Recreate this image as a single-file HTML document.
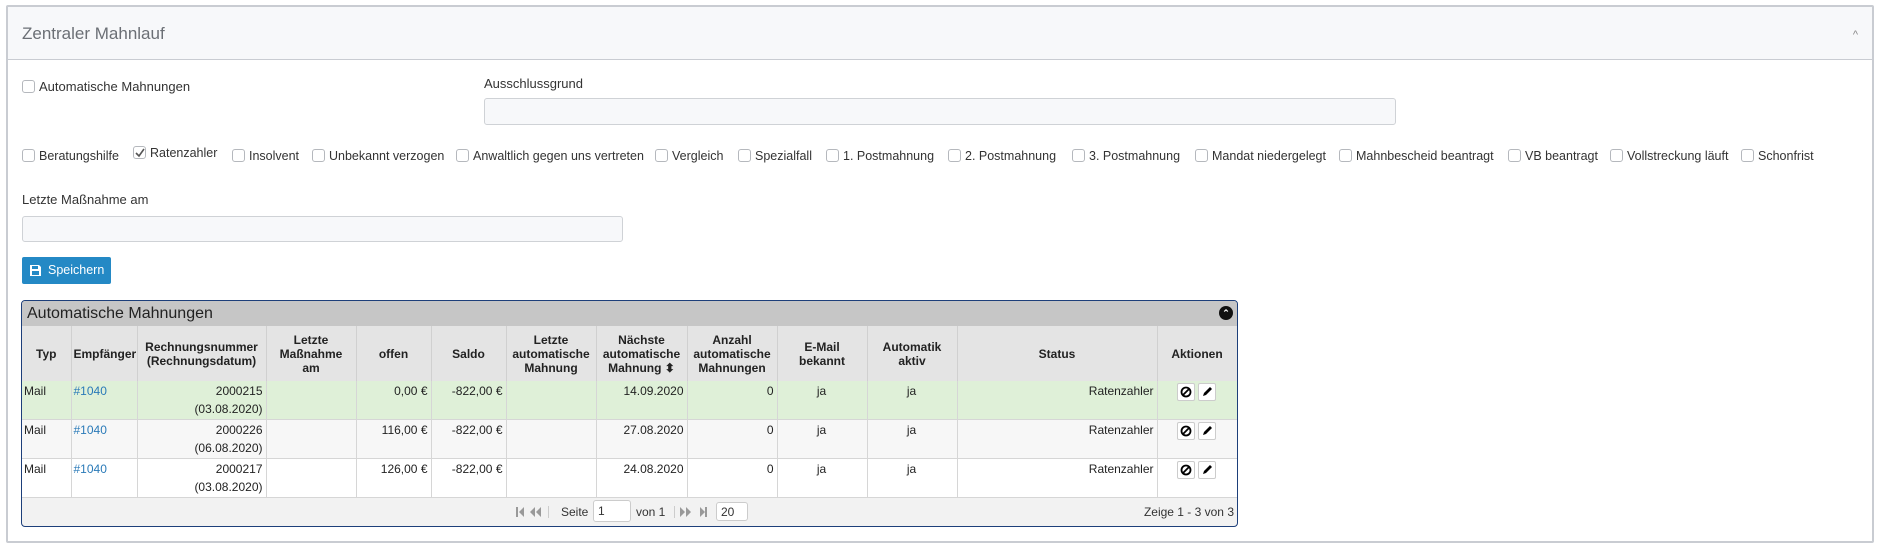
<!DOCTYPE html>
<html><head><meta charset="utf-8"><style>
*{box-sizing:border-box}
body{margin:0;width:1884px;height:550px;background:#fff;font-family:"Liberation Sans",Arial,sans-serif;color:#333;position:relative;overflow:hidden}
.panel{position:absolute;left:6px;top:5px;width:1868px;height:538px;border:2px solid #c9ccd2;border-radius:2px}
.ph{position:absolute;left:0;top:0;right:0;height:53px;background:#f7f8fa;border-bottom:1px solid #c9ccd2}
.ph span{position:absolute;left:14px;top:17px;font-size:17px;color:#6b6f75}
.ph i{position:absolute;right:14px;top:22px;font-style:normal;font-size:11px;color:#888}
.a{position:absolute;font-size:12.5px;white-space:nowrap}
.cb{display:inline-block;width:13px;height:13px;border:1px solid #b5b8bd;border-radius:3px;vertical-align:-2px;margin-right:4px;background:#fff;position:relative}
.inp{position:absolute;border:1px solid #cfd2d6;border-radius:3px;background:#f7f8fa}
.btn{position:absolute;left:22px;top:257px;width:89px;height:27px;background:#2489c5;border-radius:2px;color:#fff;font-size:12.5px;line-height:27px;padding-left:26px}
.tbl{position:absolute;left:21px;top:300px;width:1217px;height:227px;border:1px solid #1d3f7a;border-radius:4px;overflow:hidden;background:#f2f2f2}
.cap{height:25px;background:#c6c6c6;font-size:16px;line-height:25px;padding-left:5px;color:#222;position:relative}
.cap b{position:absolute;right:4px;top:5px;width:14px;height:14px;border-radius:50%;background:#111;color:#fff;font-size:9px;line-height:14px;text-align:center}
table{border-collapse:collapse;table-layout:fixed;width:1215px;font-size:12px}
th{background:#e4e4e4;height:55px;font-weight:bold;border-right:1px solid #d0d0d0;padding:0 6px;line-height:14px;color:#222;font-size:12px}
td{border-right:1px solid #d6d6d6;border-bottom:1px solid #d6d6d6;vertical-align:top;padding:1px 3px 0 2px;height:39px;line-height:18px;color:#222}
tr.g td{background:#dff0d8;height:38px}
tr.w2 td{background:#f7f7f7}
tr.w3 td{background:#fff}
.r{text-align:right}.c{text-align:center}
a{color:#2a7ab8;text-decoration:none}
.ic{display:inline-block;width:18px;height:18px;border:1px solid #ccc;border-radius:2px;background:#fff;vertical-align:top;margin-top:1px;position:relative}
.ic svg{position:absolute;left:2px;top:2px}
.ft{position:absolute;left:0;right:0;bottom:0;height:28px;font-size:12px;color:#333}
</style></head><body>
<div class="panel">
<div class="ph"><span>Zentraler Mahnlauf</span><i>^</i></div>
</div>
<div class="a" style="left:22px;top:79px;font-size:13px"><span class="cb"></span>Automatische Mahnungen</div>
<div class="a" style="left:484px;top:76px;font-size:13px">Ausschlussgrund</div>
<div class="inp" style="left:484px;top:98px;width:912px;height:27px"></div>
<div class="a" style="left:22px;top:149px"><span class="cb"></span>Beratungshilfe</div>
<div class="a" style="left:133px;top:146px"><span class="cb"><svg width="11" height="11" style="position:absolute;left:0;top:0"><path d="M2 6l3 3 5-7" stroke="#555" stroke-width="1.6" fill="none"/></svg></span>Ratenzahler</div>
<div class="a" style="left:232px;top:149px"><span class="cb"></span>Insolvent</div>
<div class="a" style="left:312px;top:149px"><span class="cb"></span>Unbekannt verzogen</div>
<div class="a" style="left:456px;top:149px"><span class="cb"></span>Anwaltlich gegen uns vertreten</div>
<div class="a" style="left:655px;top:149px"><span class="cb"></span>Vergleich</div>
<div class="a" style="left:738px;top:149px"><span class="cb"></span>Spezialfall</div>
<div class="a" style="left:826px;top:149px"><span class="cb"></span>1. Postmahnung</div>
<div class="a" style="left:948px;top:149px"><span class="cb"></span>2. Postmahnung</div>
<div class="a" style="left:1072px;top:149px"><span class="cb"></span>3. Postmahnung</div>
<div class="a" style="left:1195px;top:149px"><span class="cb"></span>Mandat niedergelegt</div>
<div class="a" style="left:1339px;top:149px"><span class="cb"></span>Mahnbescheid beantragt</div>
<div class="a" style="left:1508px;top:149px"><span class="cb"></span>VB beantragt</div>
<div class="a" style="left:1610px;top:149px"><span class="cb"></span>Vollstreckung läuft</div>
<div class="a" style="left:1741px;top:149px"><span class="cb"></span>Schonfrist</div>
<div class="a" style="left:22px;top:192px;font-size:13px">Letzte Maßnahme am</div>
<div class="inp" style="left:22px;top:216px;width:601px;height:26px"></div>
<div class="btn"><svg width="11" height="11" style="position:absolute;left:8px;top:8px" viewBox="0 0 11 11"><path d="M0 0h9l2 2v9H0z" fill="#fff"/><rect x="2" y="1" width="6" height="3" fill="#2489c5"/><rect x="2" y="6" width="7" height="4" fill="#2489c5"/></svg>Speichern</div>

<div class="tbl">
<div class="cap">Automatische Mahnungen<b>⌃</b></div>
<table>
<colgroup><col style="width:49px"><col style="width:66px"><col style="width:129px"><col style="width:90px"><col style="width:75px"><col style="width:75px"><col style="width:90px"><col style="width:91px"><col style="width:90px"><col style="width:90px"><col style="width:90px"><col style="width:200px"><col style="width:80px"></colgroup>
<tr><th>Typ</th><th style="overflow:hidden;white-space:nowrap;padding:0 2px">Empfänger</th><th style="padding:0 2px">Rechnungsnummer (Rechnungsdatum)</th><th>Letzte Maßnahme am</th><th>offen</th><th>Saldo</th><th style="padding:0 2px">Letzte automatische Mahnung</th><th style="padding:0 2px">Nächste automatische Mahnung ⬍</th><th style="padding:0 2px">Anzahl automatische Mahnungen</th><th style="padding:0 14px">E-Mail bekannt</th><th>Automatik aktiv</th><th>Status</th><th>Aktionen</th></tr>
<tr class="g"><td>Mail</td><td><a>#1040</a></td><td class="r">2000215<br>(03.08.2020)</td><td></td><td class="r">0,00 €</td><td class="r">-822,00 €</td><td></td><td class="r">14.09.2020</td><td class="r">0</td><td class="c">ja</td><td class="c">ja</td><td class="r">Ratenzahler</td><td class="c"><span class="ic"><svg width="12" height="12"><circle cx="6" cy="6" r="4.5" stroke="#000" stroke-width="1.8" fill="none"/><path d="M3 9L9 3" stroke="#000" stroke-width="1.8"/></svg></span> <span class="ic"><svg width="12" height="12"><path d="M2 10l1-3 6-6 2 2-6 6z" fill="#000"/></svg></span></td></tr>
<tr class="w2"><td>Mail</td><td><a>#1040</a></td><td class="r">2000226<br>(06.08.2020)</td><td></td><td class="r">116,00 €</td><td class="r">-822,00 €</td><td></td><td class="r">27.08.2020</td><td class="r">0</td><td class="c">ja</td><td class="c">ja</td><td class="r">Ratenzahler</td><td class="c"><span class="ic"><svg width="12" height="12"><circle cx="6" cy="6" r="4.5" stroke="#000" stroke-width="1.8" fill="none"/><path d="M3 9L9 3" stroke="#000" stroke-width="1.8"/></svg></span> <span class="ic"><svg width="12" height="12"><path d="M2 10l1-3 6-6 2 2-6 6z" fill="#000"/></svg></span></td></tr>
<tr class="w3"><td>Mail</td><td><a>#1040</a></td><td class="r">2000217<br>(03.08.2020)</td><td></td><td class="r">126,00 €</td><td class="r">-822,00 €</td><td></td><td class="r">24.08.2020</td><td class="r">0</td><td class="c">ja</td><td class="c">ja</td><td class="r">Ratenzahler</td><td class="c"><span class="ic"><svg width="12" height="12"><circle cx="6" cy="6" r="4.5" stroke="#000" stroke-width="1.8" fill="none"/><path d="M3 9L9 3" stroke="#000" stroke-width="1.8"/></svg></span> <span class="ic"><svg width="12" height="12"><path d="M2 10l1-3 6-6 2 2-6 6z" fill="#000"/></svg></span></td></tr>
</table>
<div class="ft">
<svg style="position:absolute;left:494px;top:8px" width="40" height="12"><rect x="0" y="1" width="2" height="10" fill="#999"/><path d="M8 1v10L3 6z" fill="#999"/><path d="M19 1v10l-5-5zM25 1v10l-5-5z" fill="#999"/><rect x="32" y="0" width="1" height="12" fill="#ccc"/></svg>
<span style="position:absolute;left:539px;top:7px">Seite</span>
<span style="position:absolute;left:571px;top:2px;width:38px;height:22px;border:1px solid #ccc;border-radius:3px;background:#fff;padding:3px 4px">1</span>
<span style="position:absolute;left:614px;top:7px">von 1</span>
<svg style="position:absolute;left:652px;top:8px" width="40" height="12"><rect x="0" y="0" width="1" height="12" fill="#ccc"/><path d="M6 1v10l5-5zM12 1v10l5-5z" fill="#999"/><path d="M26 1v10l5-5z" fill="#999"/><rect x="31" y="1" width="2" height="10" fill="#999"/></svg>
<span style="position:absolute;left:694px;top:4px;width:32px;height:19px;border:1px solid #ccc;border-radius:3px;background:#fff;padding:2px 4px">20</span>
<span style="position:absolute;right:3px;top:7px">Zeige 1 - 3 von 3</span>
</div>
</div>
</body></html>
